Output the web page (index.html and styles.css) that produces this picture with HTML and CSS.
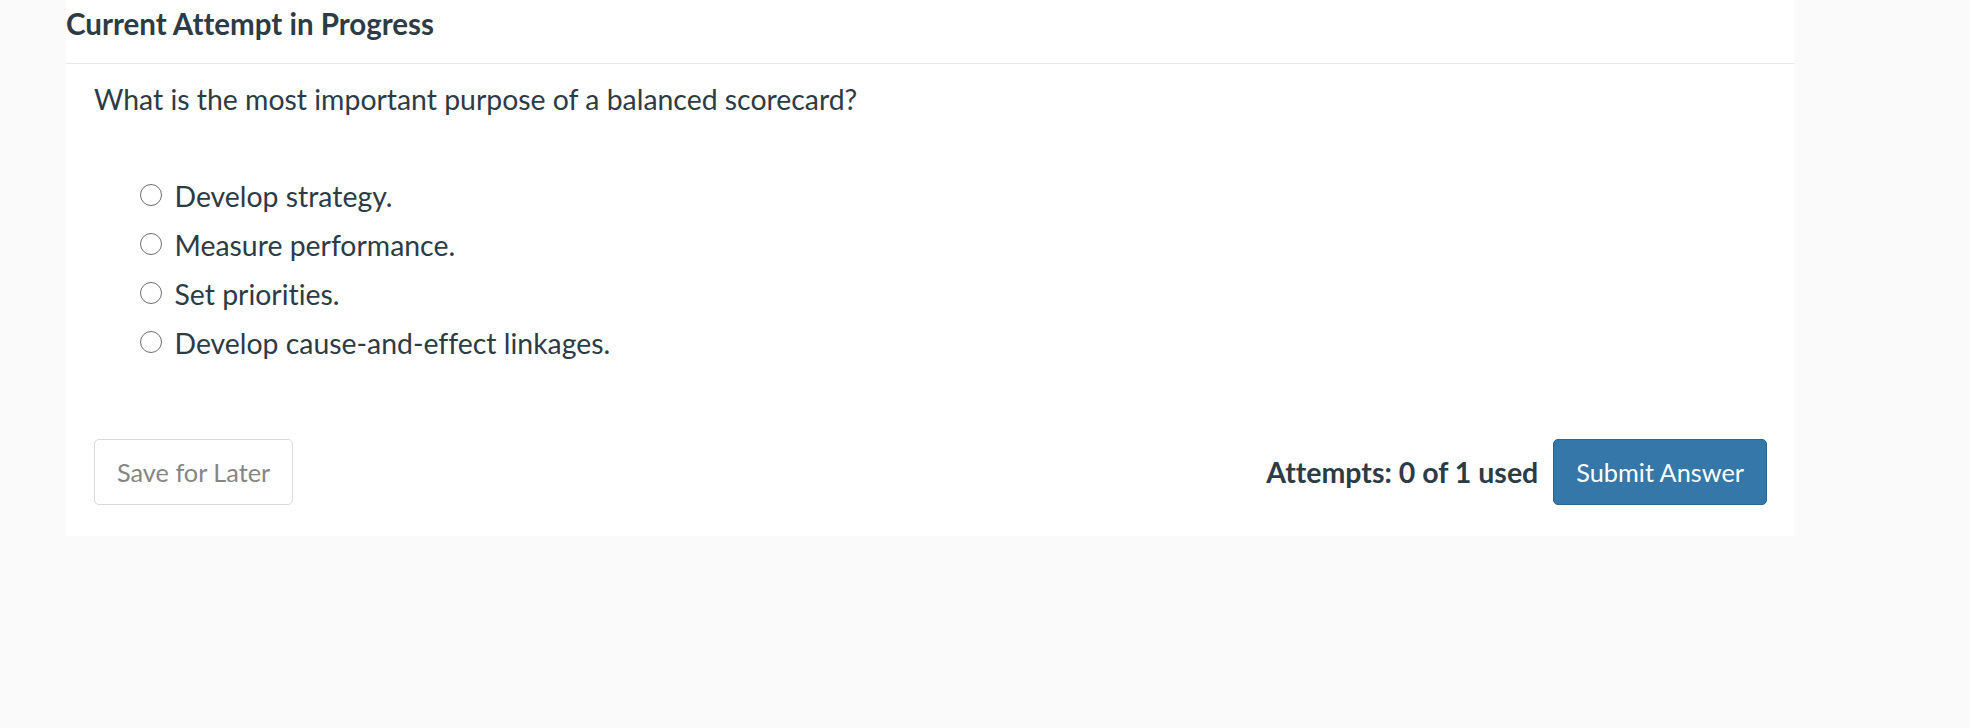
FILE: index.html
```html
<!DOCTYPE html>
<html lang="en">
<head>
<meta charset="utf-8">
<title>Current Attempt in Progress</title>
<link rel="stylesheet" href="styles.css">
</head>
<body>
<div class="card">
  <div class="card-header">
    <h2 class="card-title">Current Attempt in Progress</h2>
  </div>
  <div class="card-body">
    <p class="question">What is the most important purpose of a balanced scorecard?</p>
    <div class="options">
      <label class="option"><span class="radio"></span><span class="option-text">Develop strategy.</span></label>
      <label class="option"><span class="radio"></span><span class="option-text">Measure performance.</span></label>
      <label class="option"><span class="radio"></span><span class="option-text">Set priorities.</span></label>
      <label class="option"><span class="radio"></span><span class="option-text">Develop cause-and-effect linkages.</span></label>
    </div>
    <div class="footer">
      <button class="btn btn-default" type="button">Save for Later</button>
      <div class="footer-right">
        <span class="attempts">Attempts: 0 of 1 used</span>
        <button class="btn btn-primary" type="button">Submit Answer</button>
      </div>
    </div>
  </div>
</div>
</body>
</html>
```

FILE: styles.css
```css
html, body {
  margin: 0;
  padding: 0;
}

body {
  background: #fafafa;
  font-family: Lato, "Open Sans", "Liberation Sans", sans-serif;
  font-variant-ligatures: none;
  color: #2d3b45;
  width: 1970px;
  height: 728px;
}

.card {
  margin-left: 66px;
  width: 1728px;
  background: #ffffff;
}

.card-header {
  padding: 4px 0 19px 0;
  border-bottom: 1px solid #e8e8e8;
}

.card-title {
  margin: 0;
  font-size: 29.5px;
  font-weight: 700;
  line-height: 40px;
  color: #2d3b45;
}

.card-body {
  padding: 15px 27px 31px 28px;
}

.question {
  margin: 0;
  font-size: 28.4px;
  line-height: 40px;
}

.options {
  margin-top: 57px;
  display: flex;
  flex-direction: column;
  gap: 9px;
  padding-left: 46px;
}

.option {
  display: flex;
  align-items: center;
  height: 40px;
  font-size: 28.4px;
  line-height: 40px;
}

.radio {
  width: 20px;
  height: 20px;
  border: 1.5px solid #6f6f6f;
  border-radius: 50%;
  background: #fff;
  flex: none;
  margin-right: 12.5px;
  margin-top: -2px;
}

.footer {
  margin-top: 76px;
  display: flex;
  justify-content: space-between;
  align-items: center;
}

.footer-right {
  display: flex;
  align-items: center;
  gap: 15px;
}

.attempts {
  font-size: 28.5px;
  font-weight: 700;
  line-height: 40px;
  color: #2d3b45;
}

.btn {
  font-family: Lato, "Open Sans", "Liberation Sans", sans-serif;
  font-variant-ligatures: none;
  font-size: 25.3px;
  height: 66px;
  padding: 0 22px;
  border-radius: 5px;
  cursor: pointer;
}

.btn-default {
  background: #ffffff;
  border: 1px solid #dadada;
  color: #858585;
}

.btn-primary {
  background: #3477a8;
  border: 1px solid #2a6592;
  color: #ffffff;
}
```
